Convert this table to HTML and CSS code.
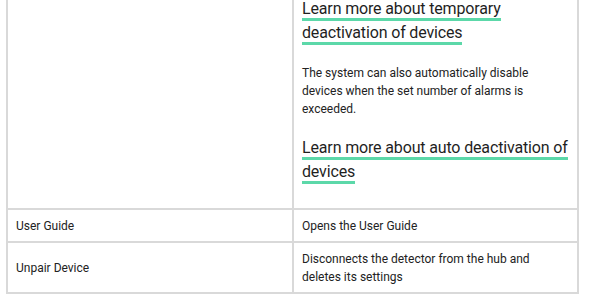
FILE: index.html
```html
<!DOCTYPE html>
<html lang="en">
<head>
<meta charset="utf-8">
<title>Settings table</title>
<link rel="stylesheet" href="styles.css">
</head>
<body>
<div class="wrap">
  <table class="settings">
    <tbody>
      <tr>
        <td class="label"></td>
        <td class="desc">
          <p class="link-p"><a class="more" href="#">Learn more about temporary deactivation of devices</a></p>
          <p class="text">The system can also automatically disable devices when the set number of alarms is exceeded.</p>
          <p class="link-p last"><a class="more" href="#">Learn more about auto deactivation of devices</a></p>
        </td>
      </tr>
      <tr>
        <td class="label">User Guide</td>
        <td class="desc">Opens the User Guide</td>
      </tr>
      <tr>
        <td class="label">Unpair Device</td>
        <td class="desc">Disconnects the detector from the hub and deletes its settings</td>
      </tr>
    </tbody>
  </table>
</div>
</body>
</html>
```

FILE: styles.css
```css
html, body {
  margin: 0;
  padding: 0;
  background: #ffffff;
}

body {
  font-family: Roboto, "Liberation Sans", Arial, sans-serif;
  color: #222222;
  font-size: 12px;
  line-height: 18px;
}

.wrap {
  padding-left: 6px;
  margin-top: -12px;
}

.settings {
  width: 573px;
  table-layout: fixed;
  border-collapse: separate;
  border-spacing: 0;
  border-top: 2px solid #d9d9d9;
}

.settings td {
  box-sizing: border-box;
  border-right: 2px solid #d9d9d9;
  border-bottom: 2px solid #d9d9d9;
  padding: 7px 6px 6px 8px;
  vertical-align: middle;
}

.settings td.label {
  width: 288px;
  border-left: 2px solid #d9d9d9;
}

.settings td.desc {
  width: 285px;
  vertical-align: top;
}

.desc p {
  margin: 0;
}

.link-p {
  font-size: 16px;
  line-height: 24px;
  letter-spacing: -0.15px;
}

.link-p.last {
  margin-top: 18px;
  margin-bottom: 18px;
}

.text {
  margin-top: 19px !important;
}

.more {
  color: #1f1f1f;
  text-decoration: none;
  border-bottom: 3px solid #5cd8a9;
}
```
